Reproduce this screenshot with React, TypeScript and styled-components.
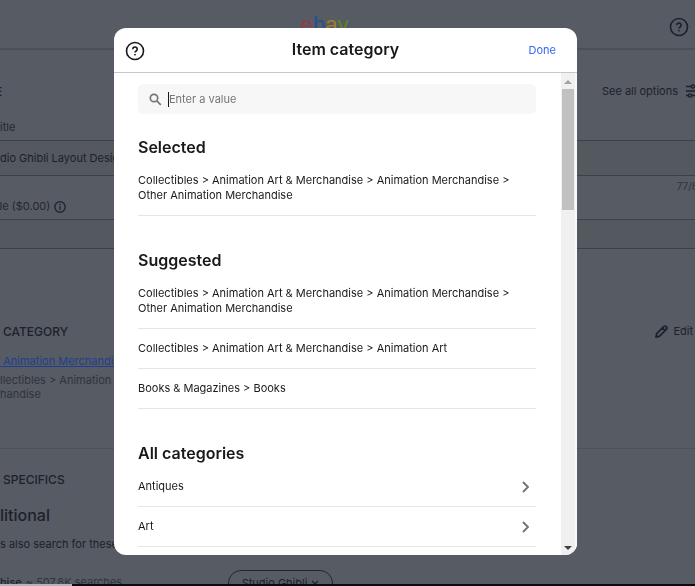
import React from "react";
import styled, { createGlobalStyle, css } from "styled-components";

const GlobalStyle = createGlobalStyle`
  *, *::before, *::after { box-sizing: border-box; }
  html, body, #root { height: 100%; }
  body {
    margin: 0;
    overflow: hidden;
    background: #575b63;
    color: #1d212b;
    font-family: Inter, "Liberation Sans", sans-serif;
    font-size: 11px;
    line-height: 15px;
  }
  h1, h2, h3, p, ul { margin: 0; padding: 0; }
  button, input { font: inherit; color: inherit; border: 0; background: none; padding: 0; margin: 0; }
  button { cursor: pointer; }
`;

const Page = styled.div`
  display: flex;
  flex-direction: column;
  height: 100vh;
  overflow: hidden;
`;

const Main = styled.main`
  flex: 1;
  min-height: 0;
  overflow: hidden;
`;

const ProgressStrip = styled.div`
  flex: none;
  height: 2px;
  background: linear-gradient(90deg, #b4b5b6 72px, #0b0c0e 72px);
`;

const Masthead = styled.header`
  display: grid;
  grid-template-columns: 1fr auto 1fr;
  align-items: start;
  height: 50px;
  margin-left: -40px;
  padding: 13px 6px 0 0;
  border-bottom: 2px solid #4c5058;

  & > button { justify-self: end; grid-column: 3; margin-top: 4px; }
`;

const Logo = styled.div`
  grid-column: 2;
  font: 400 22px/24px "Liberation Sans", sans-serif;
`;

const LogoLetter = styled.span<{ $color: string }>`
  color: ${(p) => p.$color};
`;

const IconButton = styled.button`
  display: flex;
`;

const Section = styled.section<{ $height: number; $top: number; $rule?: boolean }>`
  height: ${(p) => p.$height}px;
  padding-top: ${(p) => p.$top}px;
  ${(p) => p.$rule && css`border-bottom: 1px solid #4d5159;`}
`;

const Bar = styled.div<{ $end?: number }>`
  display: flex;
  justify-content: space-between;
  align-items: center;
  height: 20px;
  padding-right: ${(p) => p.$end || 0}px;
  white-space: nowrap;
`;

const SectionTitle = styled.h2<{ $indent?: boolean }>`
  font-size: 12px;
  font-weight: 500;
  padding-left: ${(p) => (p.$indent ? 3 : 0)}px;
`;

const ClippedTitle = styled(SectionTitle)`
  text-indent: -5px;
`;

const Action = styled.button<{ $tight?: boolean }>`
  display: flex;
  align-items: center;
  gap: ${(p) => (p.$tight ? 5 : 8)}px;
`;

const Label = styled.label<{ $top: number; $clipped?: boolean }>`
  display: flex;
  align-items: center;
  gap: 4px;
  margin-top: ${(p) => p.$top}px;
  margin-left: ${(p) => (p.$clipped ? -4 : 0)}px;
  color: #24282f;
`;

const TextField = styled.input<{ $height: number; $top: number }>`
  display: block;
  width: 100%;
  height: ${(p) => p.$height}px;
  margin-top: ${(p) => p.$top}px;
  border-top: 1px solid #3c4048;
  border-bottom: 1px solid #3c4048;
  background: #54585f;
`;

const Counter = styled.p`
  height: 15px;
  margin: 3px -3px 0 0;
  text-align: right;
  font-size: 10px;
  color: #2f333b;
`;

const CategoryLink = styled.a`
  display: block;
  margin: 13px 0 0 -4px;
  color: #213f8e;
  white-space: nowrap;
`;

const Muted = styled.p`
  margin-top: 4px;
  line-height: 14px;
  color: #30343c;
  white-space: nowrap;
`;

const Subheading = styled.h3`
  margin-top: 16px;
  font-size: 16px;
  line-height: 20px;
  font-weight: 500;
`;

const Hint = styled.p`
  margin-top: 12px;
`;

const SpecificRow = styled.div`
  display: grid;
  grid-template-columns: 228px 1fr;
  margin-top: 18px;
  line-height: 24px;
`;

const SpecificName = styled.span`
  font-weight: 500;
`;

const SearchCount = styled.span`
  margin-left: 4px;
  color: #30343c;
`;

const Pill = styled.button`
  display: flex;
  align-items: center;
  justify-content: center;
  gap: 4px;
  justify-self: start;
  width: 105px;
  height: 26px;
  border: 1px solid #22262e;
  border-radius: 13px;
`;

const Backdrop = styled.div`
  position: fixed;
  inset: 0;
  display: grid;
  grid-template-columns: 1fr minmax(0, 463px) 1fr;
  padding: 28px 4px 31px 0;
`;

const Dialog = styled.div`
  grid-column: 2;
  display: flex;
  flex-direction: column;
  min-height: 0;
  overflow: hidden;
  border-radius: 12px;
  background: #fff;
  color: #191919;
`;

const DialogHeader = styled.header`
  flex: none;
  display: grid;
  grid-template-columns: 1fr auto 1fr;
  align-items: center;
  height: 45px;
  padding: 0 21px;
  border-bottom: 1px solid #c7c7c7;

  & > button:first-child { margin-left: -10px; padding-top: 2px; }
`;

const DialogTitle = styled.h1`
  padding-bottom: 2px;
  font-size: 16px;
  line-height: 20px;
  font-weight: 600;
`;

const Done = styled.button`
  justify-self: end;
  color: #3665f3;
`;

const DialogBody = styled.div`
  flex: 1;
  min-height: 0;
  display: flex;
`;

const Content = styled.div`
  flex: 1;
  min-width: 0;
  overflow: hidden;
  padding: 11px 25px 0 24px;
`;

const Scrollbar = styled.div`
  display: flex;
  flex-direction: column;
  align-items: center;
  justify-content: space-between;
  width: 16px;
  padding: 7px 0 5px;
  border-right: 2px solid #fafafa;
  background: #f0f0f0;
`;

const Thumb = styled.div`
  width: 12px;
  height: 121px;
  margin: 5px 0 auto;
  background: #c1c1c1;
`;

const Search = styled.label`
  display: flex;
  align-items: center;
  gap: 6px;
  height: 30px;
  padding: 0 11px;
  border-radius: 5px;
  background: #f7f7f7;
`;

const SearchInput = styled.input`
  flex: 1;
  height: 15px;
  border-left: 1px solid #191919;
  outline: 0;
  &::placeholder { color: #767676; opacity: 1; }
`;

const Group = styled.section<{ $top: number }>`
  padding-top: ${(p) => p.$top}px;
`;

const GroupTitle = styled.h2`
  margin-bottom: 4px;
  font-size: 16px;
  line-height: 20px;
  font-weight: 600;
`;

const List = styled.ul`
  list-style: none;
`;

const Item = styled.li`
  border-bottom: 1px solid #e5e5e5;
`;

const Option = styled.button<{ $compact?: boolean }>`
  display: flex;
  align-items: center;
  justify-content: space-between;
  width: 100%;
  min-height: 39px;
  padding: 12px ${(p) => (p.$compact ? 6 : 20)}px 12px 0;
  text-align: left;
`;

const HelpIcon = () => (
  <svg width="20" height="20" viewBox="0 0 20 20" fill="none" stroke="currentColor" strokeWidth="1.6">
    <circle cx="10" cy="10" r="8.5" />
    <path d="M7.8 8.2a2.2 2.2 0 1 1 3.4 1.8c-.8.5-1.2.8-1.2 1.6" />
    <circle cx="10" cy="13.7" r=".5" fill="currentColor" strokeWidth="1" />
  </svg>
);

const InfoIcon = () => (
  <svg width="12" height="12" viewBox="0 0 12 12" fill="none" stroke="currentColor" strokeWidth="1.5">
    <circle cx="6" cy="6" r="5.2" />
    <path d="M6 5.3v3.4M6 3v1.2" />
  </svg>
);

const SlidersIcon = () => (
  <svg width="9" height="14" viewBox="0 0 9 14" fill="none" stroke="currentColor" strokeWidth="1.4">
    <path d="M0 2.5h5M9 2.5h7M0 7h16M0 11.5h2M6 11.5h10" />
    <circle cx="7" cy="2.5" r="1.6" />
    <circle cx="4" cy="11.5" r="1.6" />
  </svg>
);

const PencilIcon = () => (
  <svg width="13" height="13" viewBox="0 0 13 13" fill="none" stroke="currentColor" strokeWidth="1.8" strokeLinejoin="round">
    <path d="M1 12l.7-3.3 7-7a1.8 1.8 0 0 1 2.6 2.6l-7 7zM7.4 3l2.6 2.6" />
  </svg>
);

const SearchIcon = () => (
  <svg width="13" height="13" viewBox="0 0 13 13" fill="none" stroke="#767676" strokeWidth="1.7">
    <circle cx="5" cy="5" r="3.7" />
    <path d="M7.8 7.8l4 4" />
  </svg>
);

const ChevronRight = () => (
  <svg width="10" height="12" viewBox="0 0 10 12" fill="none" stroke="#707070" strokeWidth="1.8">
    <path d="M3 1l5 5-5 5" />
  </svg>
);

const ChevronDown = () => (
  <svg width="8" height="6" viewBox="0 0 8 6" fill="none" stroke="currentColor" strokeWidth="1.2">
    <path d="M1 1l3 3 3-3" />
  </svg>
);

const Arrow = ({ down = false }: { down?: boolean }) => (
  <svg width="8" height="4" viewBox="0 0 8 4" fill={down ? "#404040" : "#a3a3a3"}>
    <path d={down ? "M0 0h8L4 4z" : "M0 4h8L4 0z"} />
  </svg>
);

const otherMerchandise =
  "Collectibles > Animation Art & Merchandise > Animation Merchandise > Other Animation Merchandise";
const suggested = [
  otherMerchandise,
  "Collectibles > Animation Art & Merchandise > Animation Art",
  "Books & Magazines > Books",
];
const categories = ["Antiques", "Art"];

export default function App() {
  return (
    <>
      <GlobalStyle />
      <Page>
        <Masthead>
          <Logo aria-label="ebay">
            <LogoLetter $color="#963a47">e</LogoLetter>
            <LogoLetter $color="#20528f">b</LogoLetter>
            <LogoLetter $color="#a17c2b">a</LogoLetter>
            <LogoLetter $color="#628229">y</LogoLetter>
          </Logo>
          <IconButton aria-label="Help"><HelpIcon /></IconButton>
        </Masthead>
        <Main>
          <Section $height={246} $top={31}>
            <Bar>
              <ClippedTitle>E</ClippedTitle>
              <Action>See all options <SlidersIcon /></Action>
            </Bar>
            <Label $top={19} htmlFor="title">itle</Label>
            <TextField id="title" $height={36} $top={5} defaultValue="dio Ghibli Layout Design" />
            <Counter>77/8</Counter>
            <Label $top={5} $clipped htmlFor="subtitle">tle ($0.00) <InfoIcon /></Label>
            <TextField id="subtitle" $height={30} $top={5} />
          </Section>
          <Section $height={153} $top={25} $rule>
            <Bar $end={2}>
              <SectionTitle $indent>CATEGORY</SectionTitle>
              <Action $tight><PencilIcon />Edit</Action>
            </Bar>
            <CategoryLink href="#category">r Animation Merchandise</CategoryLink>
            <Muted>llectibles &gt; Animation Art<br />handise</Muted>
          </Section>
          <Section $height={137} $top={20}>
            <Bar><SectionTitle $indent>SPECIFICS</SectionTitle></Bar>
            <Subheading>litional</Subheading>
            <Hint>s also search for these</Hint>
            <SpecificRow>
              <div>
                <SpecificName>hise</SpecificName>
                <SearchCount>~ 507.8K searches</SearchCount>
              </div>
              <Pill>Studio Ghibli <ChevronDown /></Pill>
            </SpecificRow>
          </Section>
        </Main>
        <ProgressStrip />
      </Page>
      <Backdrop>
        <Dialog role="dialog" aria-modal="true" aria-labelledby="dialog-title">
          <DialogHeader>
            <IconButton aria-label="Help"><HelpIcon /></IconButton>
            <DialogTitle id="dialog-title">Item category</DialogTitle>
            <Done>Done</Done>
          </DialogHeader>
          <DialogBody>
            <Content>
              <Search>
                <SearchIcon />
                <SearchInput aria-label="Search categories" placeholder="Enter a value" />
              </Search>
              <Group $top={23}>
                <GroupTitle>Selected</GroupTitle>
                <List><Item><Option>{otherMerchandise}</Option></Item></List>
              </Group>
              <Group $top={34}>
                <GroupTitle>Suggested</GroupTitle>
                <List>
                  {suggested.map((name) => <Item key={name}><Option>{name}</Option></Item>)}
                </List>
              </Group>
              <Group $top={34}>
                <GroupTitle>All categories</GroupTitle>
                <List>
                  {categories.map((name) => (
                    <Item key={name}><Option $compact>{name}<ChevronRight /></Option></Item>
                  ))}
                </List>
              </Group>
            </Content>
            <Scrollbar aria-hidden="true">
              <Arrow />
              <Thumb />
              <Arrow down />
            </Scrollbar>
          </DialogBody>
        </Dialog>
      </Backdrop>
    </>
  );
}
